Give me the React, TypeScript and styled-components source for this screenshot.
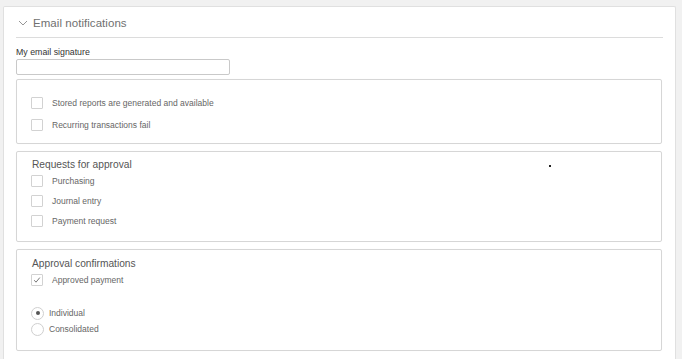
import styled, { createGlobalStyle } from "styled-components"

const GlobalStyle = createGlobalStyle`
  html, body {
    margin: 0;
    padding: 0;
    background: #f1f1f1;
    font-family: "Liberation Sans", Arial, Helvetica, sans-serif;
  }
  #root {
    height: 359px;
    overflow: hidden;
  }
`

const Page = styled.div`
  padding: 6px 6px 0 3px;
  height: 359px;
  box-sizing: border-box;
`

const Panel = styled.section`
  position: relative;
  background: #fff;
  border: 1px solid #e0e0e0;
  border-bottom: none;
  border-radius: 2px 2px 0 0;
  padding: 0 13px 0 12px;
  height: 100%;
  box-sizing: border-box;
`

const Header = styled.div`
  display: flex;
  align-items: center;
  gap: 5px;
  height: 31px;
  box-sizing: border-box;
  padding: 1px 0 0 2px;
  margin-right: -1px;
  border-bottom: 1px solid #dcdcdc;
`

const HeaderTitle = styled.span`
  font-size: 11.5px;
  color: #707070;
  letter-spacing: 0.05px;
`

const FieldLabel = styled.div`
  margin-top: 9px;
  font-size: 8.8px;
  line-height: 11px;
  color: #333;
`

const TextInput = styled.input`
  display: block;
  width: 214px;
  height: 16px;
  box-sizing: border-box;
  margin: 1px 0 4px 0;
  border: 1px solid #c9c9c9;
  border-radius: 2px;
  background: #fff;
  padding: 0 4px;
  outline: none;
`

const GroupBox = styled.div<{ $pt: number; $pb: number }>`
  border: 1px solid #d6d6d6;
  border-radius: 2px;
  padding: ${p => p.$pt}px 14px ${p => p.$pb}px 14px;
  margin-bottom: 7px;
  box-shadow: 0 0 1px rgba(0, 0, 0, 0.04);
`

const GroupTitle = styled.div`
  font-size: 10.2px;
  line-height: 13px;
  height: 13px;
  color: #555;
  padding-left: 1px;
`

const OptionRow = styled.label<{ $h: number; $gap?: number }>`
  display: flex;
  align-items: center;
  gap: ${p => p.$gap ?? 9}px;
  height: ${p => p.$h}px;
  font-size: 8.5px;
  color: #666;
`

const CheckBox = styled.span`
  display: inline-flex;
  align-items: center;
  justify-content: center;
  width: 12px;
  height: 12px;
  box-sizing: border-box;
  border: 1px solid #d2d2d2;
  border-radius: 1px;
  background: #fff;
`

const Radio = styled.span<{ $on?: boolean }>`
  display: inline-flex;
  align-items: center;
  justify-content: center;
  width: 13px;
  height: 13px;
  box-sizing: border-box;
  border: 1px solid #cfcfcf;
  border-radius: 50%;
  background: #fff;

  &::after {
    content: "";
    display: ${p => (p.$on ? "block" : "none")};
    width: 4px;
    height: 4px;
    border-radius: 50%;
    background: #555;
  }
`

const Spacer = styled.div<{ $h: number }>`
  height: ${p => p.$h}px;
`

const Speck = styled.span`
  position: absolute;
  left: 545px;
  top: 158px;
  width: 2px;
  height: 2px;
  background: #222;
`

function Chevron() {
  return (
    <svg width="10" height="6" viewBox="0 0 10 6" fill="none">
      <path d="M1 1 L5 5 L9 1" stroke="#8a8a8a" strokeWidth="0.9" />
    </svg>
  )
}

function Tick() {
  return (
    <svg width="10" height="10" viewBox="0 0 10 10" fill="none">
      <path d="M2.2 5.2 L4 7.2 L7.8 2.6" stroke="#666" strokeWidth="0.9" />
    </svg>
  )
}

function Check({ label, checked, h }: { label: string; checked?: boolean; h: number }) {
  return (
    <OptionRow $h={h}>
      <CheckBox>{checked && <Tick />}</CheckBox>
      <span>{label}</span>
    </OptionRow>
  )
}

function RadioOption({ label, on }: { label: string; on?: boolean }) {
  return (
    <OptionRow $h={16} $gap={5}>
      <Radio $on={on} />
      <span>{label}</span>
    </OptionRow>
  )
}

export default function App() {
  return (
    <>
      <GlobalStyle />
      <Page>
        <Panel>
          <Header>
            <Chevron />
            <HeaderTitle>Email notifications</HeaderTitle>
          </Header>

          <FieldLabel>My email signature</FieldLabel>
          <TextInput type="text" />

          <GroupBox $pt={12} $pb={7}>
            <Check label="Stored reports are generated and available" h={22} />
            <Check label="Recurring transactions fail" h={22} />
          </GroupBox>

          <GroupBox $pt={6} $pb={10}>
            <GroupTitle>Requests for approval</GroupTitle>
            <Check label="Purchasing" h={20} />
            <Check label="Journal entry" h={20} />
            <Check label="Payment request" h={20} />
          </GroupBox>

          <GroupBox $pt={7} $pb={13}>
            <GroupTitle>Approval confirmations</GroupTitle>
            <Check label="Approved payment" checked h={20} />
            <Spacer $h={15} />
            <RadioOption label="Individual" on />
            <RadioOption label="Consolidated" />
          </GroupBox>

          <Speck />
        </Panel>
      </Page>
    </>
  )
}
